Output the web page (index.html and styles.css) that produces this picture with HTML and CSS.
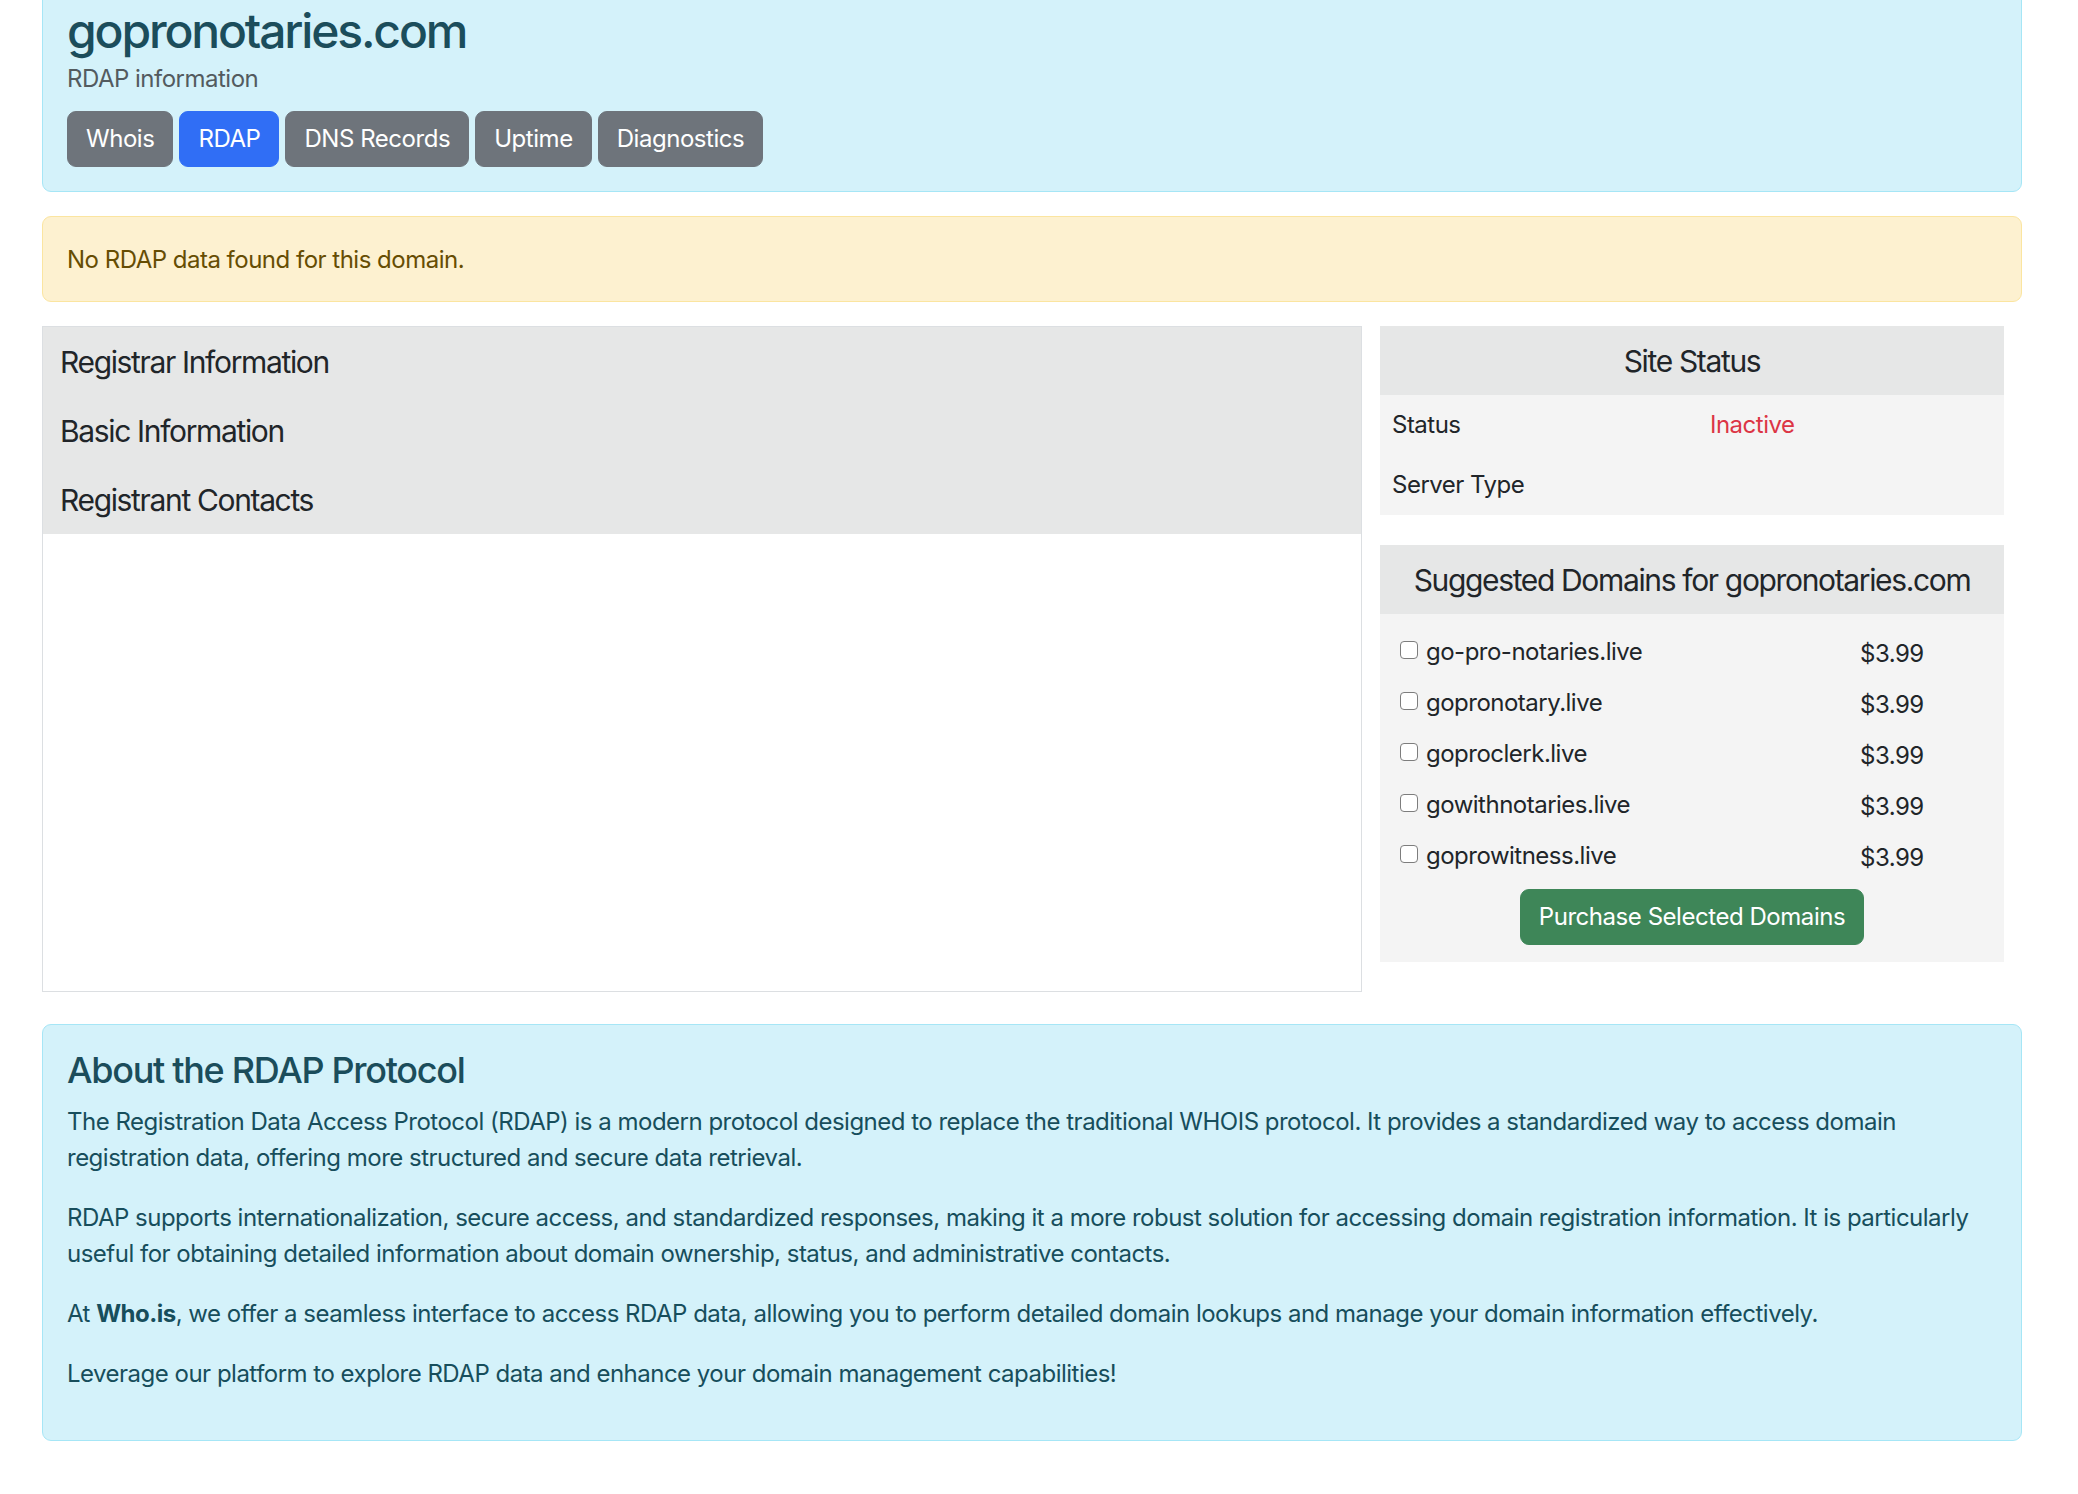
FILE: index.html
```html
<!DOCTYPE html>
<html lang="en">
<head>
<meta charset="utf-8">
<title>gopronotaries.com - RDAP information</title>
<link rel="stylesheet" href="styles.css">
</head>
<body>
<div class="page">
  <header class="info-card hero">
    <h1 class="hero-title">gopronotaries.com</h1>
    <p class="hero-sub">RDAP information</p>
    <nav class="tabs">
      <a class="btn btn-gray">Whois</a>
      <a class="btn btn-blue">RDAP</a>
      <a class="btn btn-gray">DNS Records</a>
      <a class="btn btn-gray">Uptime</a>
      <a class="btn btn-gray">Diagnostics</a>
    </nav>
  </header>

  <div class="alert-warn">No RDAP data found for this domain.</div>

  <div class="main-row">
    <section class="panel">
      <div class="panel-head">
        <div class="panel-item">Registrar Information</div>
        <div class="panel-item">Basic Information</div>
        <div class="panel-item">Registrant Contacts</div>
      </div>
    </section>

    <aside class="side">
      <div class="side-card">
        <div class="side-head">Site Status</div>
        <table class="status-table">
          <tr><td class="st-label">Status</td><td class="st-inactive">Inactive</td></tr>
          <tr><td class="st-label">Server Type</td><td></td></tr>
        </table>
      </div>

      <div class="side-card">
        <div class="side-head">Suggested Domains for gopronotaries.com</div>
        <div class="domains">
          <label class="domain-row"><span class="domain-name"><input type="checkbox" class="check">go-pro-notaries.live</span><span class="price">$3.99</span></label>
          <label class="domain-row"><span class="domain-name"><input type="checkbox" class="check">gopronotary.live</span><span class="price">$3.99</span></label>
          <label class="domain-row"><span class="domain-name"><input type="checkbox" class="check">goproclerk.live</span><span class="price">$3.99</span></label>
          <label class="domain-row"><span class="domain-name"><input type="checkbox" class="check">gowithnotaries.live</span><span class="price">$3.99</span></label>
          <label class="domain-row"><span class="domain-name"><input type="checkbox" class="check">goprowitness.live</span><span class="price">$3.99</span></label>
          <div class="purchase-wrap"><button class="btn btn-green">Purchase Selected Domains</button></div>
        </div>
      </div>
    </aside>
  </div>

  <section class="info-card about">
    <h2 class="about-title">About the RDAP Protocol</h2>
    <p>The Registration Data Access Protocol (RDAP) is a modern protocol designed to replace the traditional WHOIS protocol. It provides a standardized way to access domain registration data, offering more structured and secure data retrieval.</p>
    <p>RDAP supports internationalization, secure access, and standardized responses, making it a more robust solution for accessing domain registration information. It is particularly useful for obtaining detailed information about domain ownership, status, and administrative contacts.</p>
    <p>At <strong>Who.is</strong>, we offer a seamless interface to access RDAP data, allowing you to perform detailed domain lookups and manage your domain information effectively.</p>
    <p>Leverage our platform to explore RDAP data and enhance your domain management capabilities!</p>
  </section>
</div>
</body>
</html>
```

FILE: styles.css
```css
* { box-sizing: border-box; }

html, body {
  margin: 0;
  padding: 0;
  background: #ffffff;
}

body {
  font-family: Inter, "Liberation Sans", Arial, sans-serif;
  font-size: 24px;
  line-height: 36px;
  color: #212529;
  letter-spacing: -0.021em;
}

.page {
  width: 1980px;
  margin: -25px 0 0 42px;
}

/* info cards (hero + about) */
.info-card {
  background: #d4f2fa;
  border: 1px solid #a6e6f6;
  border-radius: 9px;
  padding: 24px;
  color: #174e5c;
}

.hero-title {
  margin: 2px 0 1px;
  font-size: 48px;
  line-height: 57.6px;
  font-weight: 500;
  letter-spacing: -0.045em;
  color: #1b4d5b;
}

.hero-sub {
  margin: 0 0 14px;
  color: #535b5f;
}

.tabs {
  display: flex;
  gap: 6px;
}

.btn {
  display: inline-block;
  font-family: inherit;
  font-size: 24px;
  line-height: 36px;
  letter-spacing: -0.019em;
  padding: 9px 18px;
  border: 1px solid transparent;
  border-radius: 9px;
  color: #ffffff;
  text-decoration: none;
  cursor: pointer;
}

.btn-gray { background: #6e747b; border-color: #6e747b; }
.btn-blue { background: #306ef5; border-color: #306ef5; }
.btn-green { background: #3e8658; border-color: #3e8658; }

/* warning alert */
.alert-warn {
  margin-top: 24px;
  padding: 25px 24px 23px;
  background: #fdf1d0;
  border: 1px solid #fbe5a0;
  border-radius: 9px;
  color: #664d03;
}

/* main two-column row */
.main-row {
  margin-top: 24px;
  display: grid;
  grid-template-columns: 1320px 660px;
}

.panel {
  border: 1px solid #dcdfe2;
  background: #ffffff;
}

.panel-head {
  background: #e6e7e7;
  padding-top: 1px;
}

.panel-item {
  padding: 16.5px 17px;
  font-size: 30px;
  line-height: 36px;
  letter-spacing: -0.045em;
}

.panel-item:last-child {
  padding-bottom: 15.5px;
}

.side {
  padding: 0 18px;
}

.side-card {
  background: #f4f4f4;
  margin-bottom: 30px;
}

.side-head {
  background: #e6e7e7;
  text-align: center;
  font-size: 30px;
  line-height: 36px;
  padding: 17px 12px 16px;
  letter-spacing: -0.045em;
}

.status-table {
  width: 100%;
  border-collapse: collapse;
}

.status-table td {
  padding: 12px;
  height: 60px;
  vertical-align: middle;
}

.st-label { width: 318px; }
.st-inactive { color: #dc3545; }

.domains {
  padding: 13px 0 17px;
}

.domain-row {
  display: grid;
  grid-template-columns: 1fr 144px;
  align-items: center;
  height: 51px;
  padding-left: 20px;
}

.domain-name {
  display: flex;
  align-items: center;
}

.check {
  appearance: none;
  -webkit-appearance: none;
  width: 18px;
  height: 18px;
  margin: -4px 8px 0 0;
  border: 1.5px solid #7d7d7d;
  border-radius: 4px;
  background: #ffffff;
  flex: none;
}

.price {
  padding-top: 3px;
}

.purchase-wrap {
  display: flex;
  justify-content: center;
  margin-top: 7px;
}

/* about */
.about {
  margin-top: 32px;
}

.about-title {
  margin: 0 0 12px;
  font-size: 36px;
  line-height: 43.2px;
  font-weight: 500;
  letter-spacing: -0.036em;
  color: #1b4d5b;
}

.about p {
  margin: 0 0 24px;
}

.about strong {
  font-weight: 700;
}
```
